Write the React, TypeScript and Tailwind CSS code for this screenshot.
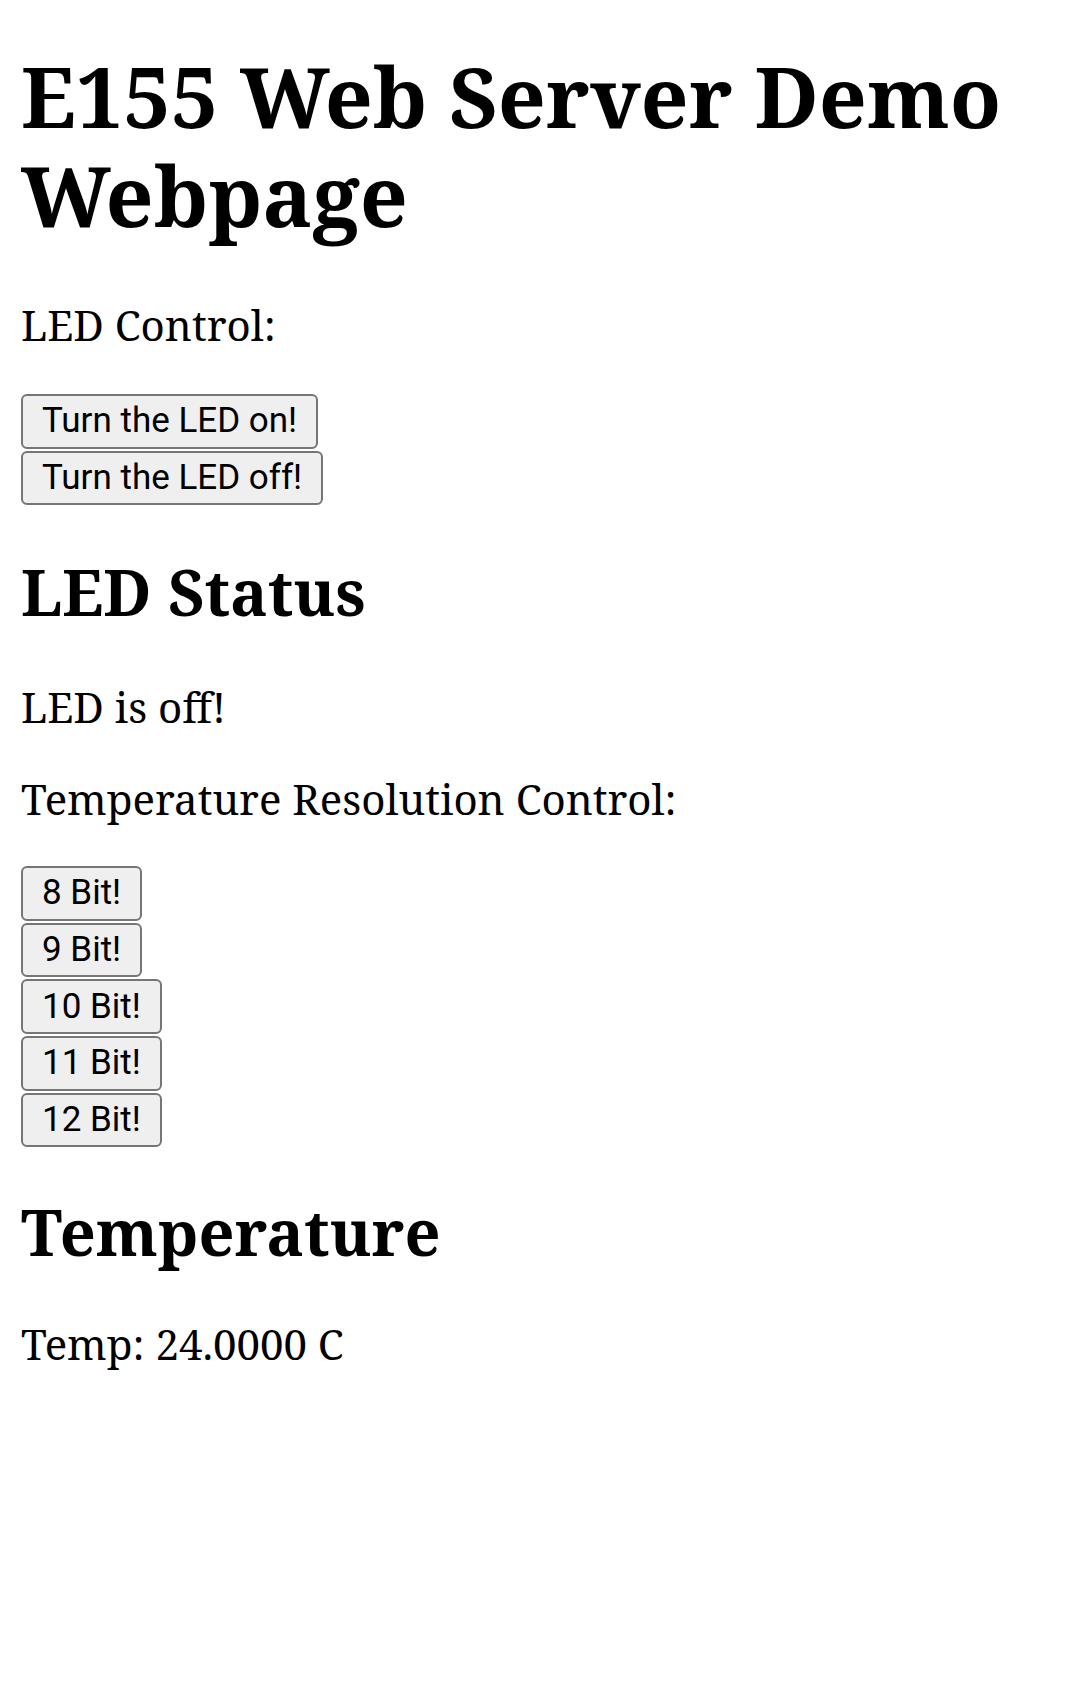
import React from 'react'

const serif = { fontFamily: '"Noto Serif", "DejaVu Serif", serif' }

function Btn({ label }: { label: string }) {
  return (
    <button
      type="button"
      className="flex h-[54.6px] items-center rounded-[6px] border-[2.5px] border-[#767676] bg-[#efefef] px-[19px] pb-[1px] text-[35px] leading-none text-black"
      style={{ fontFamily: 'Roboto, "Liberation Sans", sans-serif' }}
    >
      {label}
    </button>
  )
}

export default function App() {
  const bits = ['8 Bit!', '9 Bit!', '10 Bit!', '11 Bit!', '12 Bit!']

  return (
    <div className="min-h-screen bg-white px-[21px] pt-[46px] text-black" style={serif}>
      <h1 className="text-[84px] font-bold leading-[99px]">E155 Web Server Demo Webpage</h1>

      <p className="mt-[56px] text-[42px] leading-[50px]">LED Control:</p>
      <div className="mt-[44px] flex flex-col items-start gap-[2px]">
        <Btn label="Turn the LED on!" />
        <Btn label="Turn the LED off!" />
      </div>

      <h2 className="mt-[51px] text-[63px] font-bold leading-[72px]">LED Status</h2>
      <p className="mt-[54px] text-[42px] leading-[50px]">LED is off!</p>

      <p className="mt-[42px] text-[42px] leading-[50px]">Temperature Resolution Control:</p>
      <div className="mt-[42px] flex flex-col items-start gap-[2px]">
        {bits.map((b) => (
          <Btn key={b} label={b} />
        ))}
      </div>

      <h2 className="mt-[49px] text-[63px] font-bold leading-[72px]">Temperature</h2>
      <p className="mt-[51px] text-[42px] leading-[50px]">Temp: 24.0000 C</p>
    </div>
  )
}
